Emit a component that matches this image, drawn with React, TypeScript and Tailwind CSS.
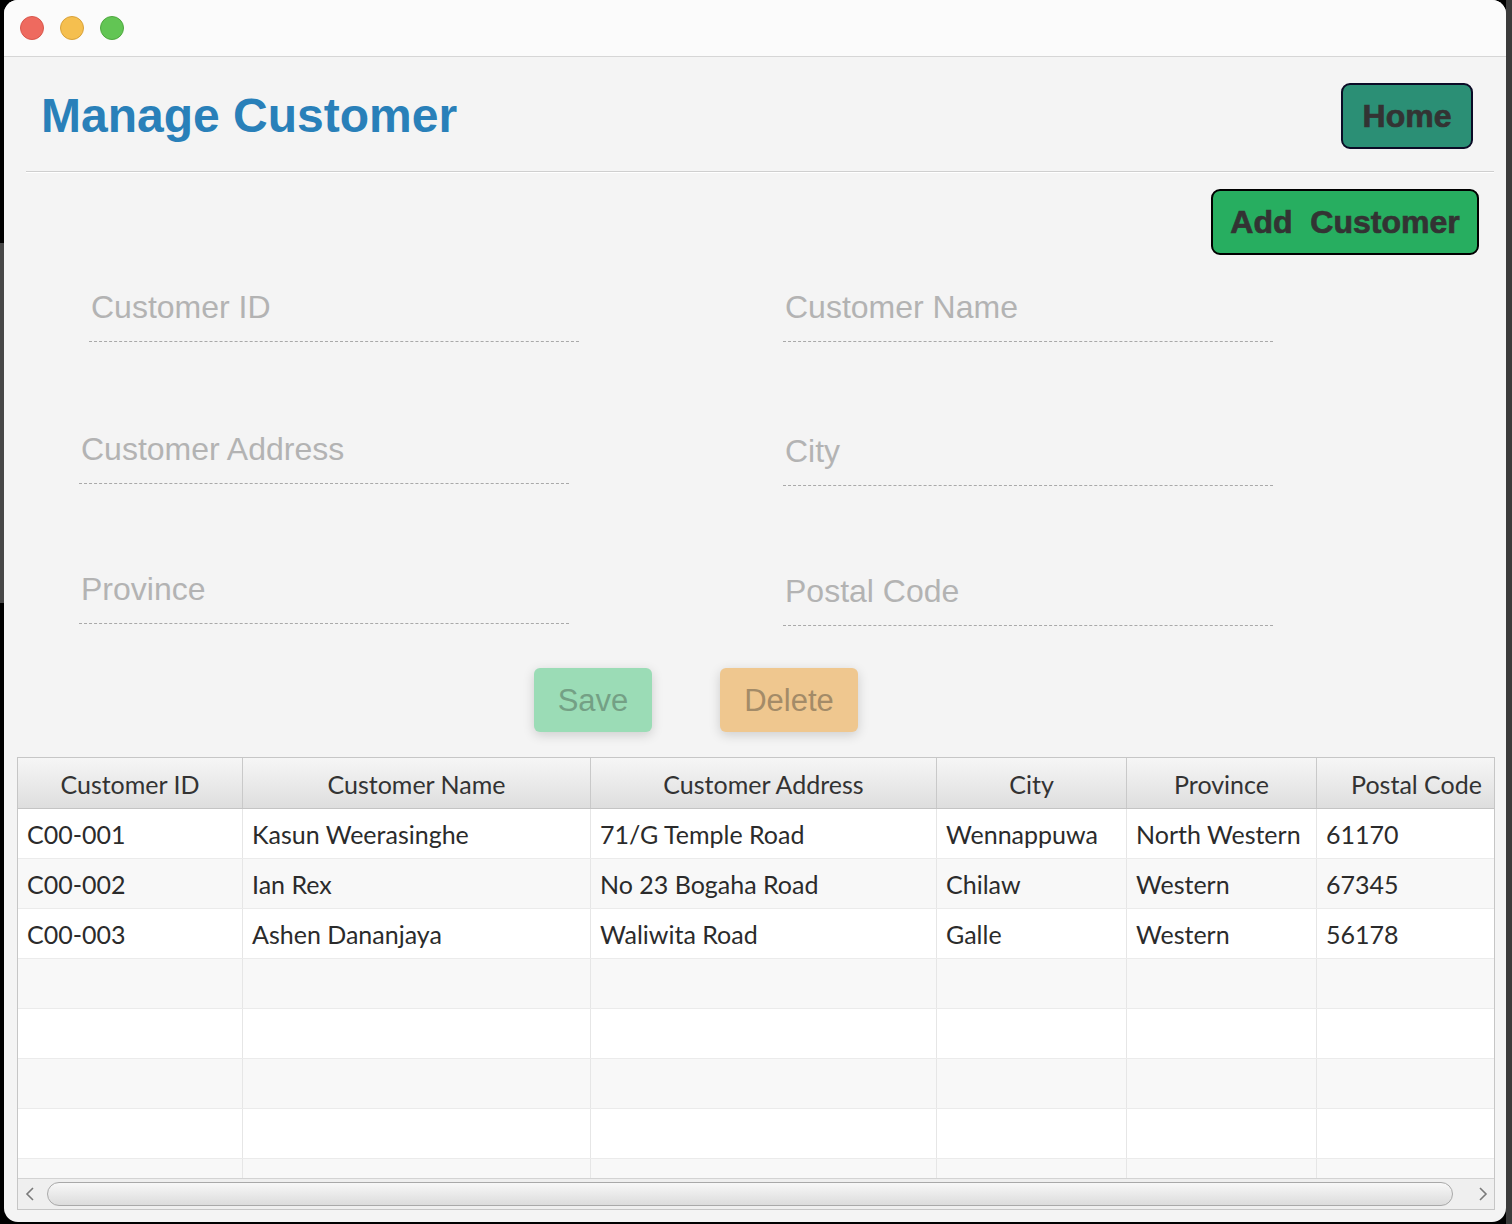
const arial = "font-['Liberation_Sans',Arial,sans-serif]";
const lato = "font-['Lato',sans-serif]";

const columns = ['Customer ID', 'Customer Name', 'Customer Address', 'City', 'Province', 'Postal Code'];

const customers = [
  ['C00-001', 'Kasun Weerasinghe', '71/G Temple Road', 'Wennappuwa', 'North Western', '61170'],
  ['C00-002', 'Ian Rex', 'No 23 Bogaha Road', 'Chilaw', 'Western', '67345'],
  ['C00-003', 'Ashen Dananjaya', 'Waliwita Road', 'Galle', 'Western', '56178'],
];

const gridCols = 'grid grid-cols-[225px_348px_346px_190px_190px_200px]';

function Field({ label, className = '' }: { label: string; className?: string }) {
  return (
    <div className={`h-[55px] w-[490px] border-b border-dashed border-[#a9a9a9] pl-[2px] ${className}`}>
      <span className={`block text-[32px] leading-[40px] text-[#b3b3b3] ${arial}`}>{label}</span>
    </div>
  );
}

function Chevron({ dir }: { dir: 'left' | 'right' }) {
  return (
    <svg width="10" height="16" viewBox="0 0 10 16" className="shrink-0">
      <polyline
        points={dir === 'left' ? '8,2 2,8 8,14' : '2,2 8,8 2,14'}
        fill="none"
        stroke="#7a7a7a"
        strokeWidth="1.6"
      />
    </svg>
  );
}

export default function App() {
  const emptyRows = 5;

  return (
    <div className="flex h-[1224px] w-[1512px] overflow-hidden bg-black">
      <div className="flex w-[4px] shrink-0 flex-col">
        <div className="h-[243px] bg-black" />
        <div className="h-[360px] bg-[#474747]" />
        <div className="flex-1 bg-black" />
      </div>

      <div className="flex h-[1222px] w-[1502px] shrink-0 flex-col overflow-hidden rounded-[14px] bg-[#f4f4f4]">
        {/* title bar */}
        <div className="flex h-[57px] shrink-0 items-center gap-[16px] border-b border-[#d6d6d6] bg-[#fbfbfb] pl-[16px]">
          <span className="h-[24px] w-[24px] rounded-full border border-[#d9574c] bg-[#ee6a5f]" />
          <span className="h-[24px] w-[24px] rounded-full border border-[#d9a23a] bg-[#f5bf4f]" />
          <span className="h-[24px] w-[24px] rounded-full border border-[#4fa83f] bg-[#62c554]" />
        </div>

        {/* header */}
        <div className="flex h-[114px] shrink-0 items-start justify-between pl-[37px] pr-[33px]">
          <h1 className={`mt-[35px] text-[48px] font-bold leading-none text-[#2980b9] ${arial}`}>Manage Customer</h1>
          <button
            className={`mt-[26px] h-[66px] w-[132px] rounded-[9px] border-2 border-[#0b0b26] bg-[#2b8f75] text-[32px] font-bold text-[#333] [-webkit-text-stroke:0.7px_#333] ${arial}`}
          >
            Home
          </button>
        </div>
        <div className="ml-[22px] mr-[12px] h-[2px] border-t border-b border-t-[#cfcfcf] border-b-white" />

        <div className="mt-[16px] flex justify-end pr-[27px]">
          <button
            className={`h-[66px] w-[268px] whitespace-pre rounded-[9px] border-2 border-black bg-[#27ae60] text-[32px] font-bold text-[#333] [-webkit-text-stroke:0.7px_#333] ${arial}`}
          >
            {'Add  Customer'}
          </button>
        </div>

        {/* form */}
        <div className="mt-[32px] flex">
          <div className="flex w-[779px] shrink-0 flex-col pl-[75px]">
            <Field label="Customer ID" className="ml-[10px]" />
            <Field label="Customer Address" className="mt-[87px]" />
            <Field label="Province" className="mt-[85px]" />
          </div>
          <div className="flex flex-col">
            <Field label="Customer Name" />
            <Field label="City" className="mt-[89px]" />
            <Field label="Postal Code" className="mt-[85px]" />
          </div>
        </div>

        <div className="mt-[42px] flex pl-[530px]">
          <button
            className={`h-[64px] w-[118px] rounded-[6px] bg-[#9bdcb6] pt-[3px] text-[31px] text-[#74a085] shadow-[0_3px_12px_rgba(0,0,0,0.16)] ${arial}`}
          >
            Save
          </button>
          <button
            className={`ml-[68px] h-[64px] w-[138px] rounded-[6px] bg-[#efc78f] pt-[3px] text-[31px] text-[#a38b68] shadow-[0_3px_12px_rgba(0,0,0,0.16)] ${arial}`}
          >
            Delete
          </button>
        </div>

        {/* table */}
        <div className={`ml-[13px] mt-[25px] flex h-[453px] w-[1478px] flex-col overflow-hidden border border-[#c6c6c6] bg-white ${lato}`}>
          <div className={`${gridCols} h-[51px] shrink-0 border-b border-[#c4c4c4]`}>
            {columns.map((c) => (
              <div
                key={c}
                className="flex items-center justify-center border-r border-[#c9c9c9] bg-gradient-to-b from-[#f6f6f6] to-[#dedede] pt-[3px] text-[25px] text-[#333]"
              >
                {c}
              </div>
            ))}
          </div>

          <div className="flex-1 overflow-hidden">
            {customers.map((row, i) => (
              <div key={row[0]} className={`${gridCols} h-[50px] border-b border-[#ebebeb] ${i % 2 ? 'bg-[#f8f8f8]' : 'bg-white'}`}>
                {row.map((cell, j) => (
                  <div key={j} className="flex items-center border-r border-[#e6e6e6] pl-[9px] pt-[2px] text-[25px] text-[#2b2b2b]">
                    {cell}
                  </div>
                ))}
              </div>
            ))}
            {Array.from({ length: emptyRows }).map((_, k) => (
              <div
                key={k}
                className={`${gridCols} h-[50px] border-b border-[#ebebeb] ${(k + 3) % 2 ? 'bg-[#f8f8f8]' : 'bg-white'}`}
              >
                {columns.map((c) => (
                  <div key={c} className="border-r border-[#e6e6e6]" />
                ))}
              </div>
            ))}
          </div>

          <div className="flex h-[31px] shrink-0 items-center border-t border-[#d3d3d3] bg-[#efefef] pl-[7px]">
            <Chevron dir="left" />
            <div className="ml-[12px] h-[24px] w-[1406px] rounded-full border border-[#a9a9a9] bg-gradient-to-b from-[#f8f8f8] to-[#dcdcdc]" />
            <div className="ml-[25px]">
              <Chevron dir="right" />
            </div>
          </div>
        </div>
      </div>

      <div className="flex-1 bg-[#3b3b3b]" />
    </div>
  );
}
